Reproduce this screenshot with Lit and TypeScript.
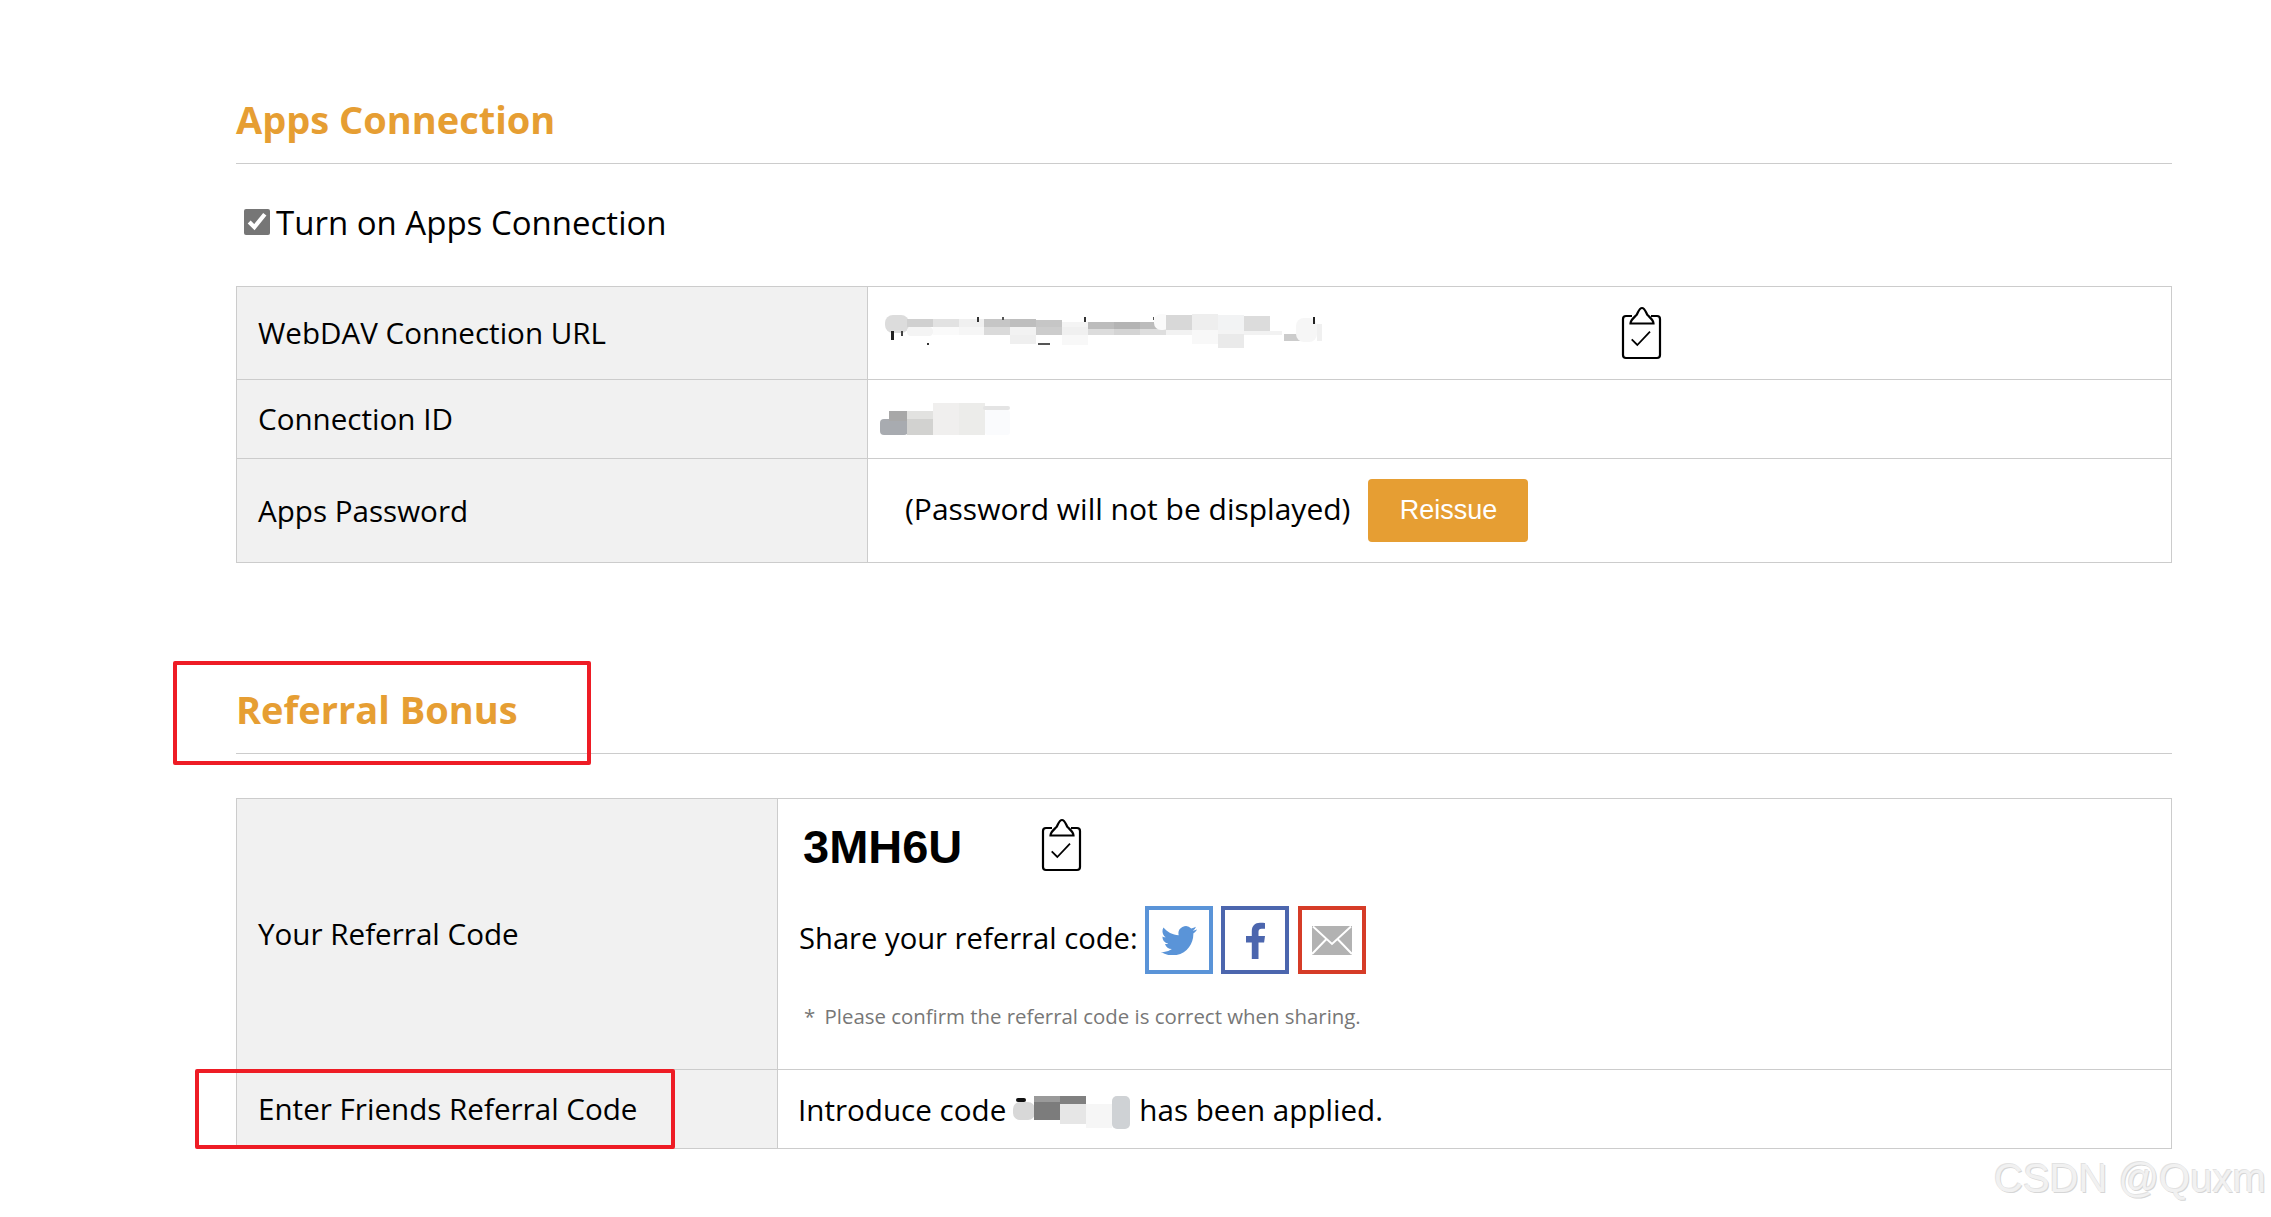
import { LitElement, html, css, svg } from "lit";
import { customElement } from "lit/decorators.js";

type R = [number, number, number, number, string, number?];

const urlBlob: R[] = [
  [15, 13, 24, 18, "#dcdcdc", 8],
  [37, 17, 26, 8, "#d0d0d0"], [63, 17, 26, 8, "#e2e2e2"], [89, 17, 25, 8, "#f0f0f0"], [114, 17, 26, 8, "#c6c6c6"],
  [140, 17, 26, 8, "#bebebe"], [166, 18, 26, 7, "#c6c6c6"], [192, 20, 26, 5, "#f4f4f4"], [218, 20, 26, 7, "#bcbcbc"],
  [244, 20, 26, 7, "#b4b4b4"], [270, 20, 26, 7, "#bcbcbc"],
  [37, 25, 26, 9, "#f4f4f4", 4], [63, 25, 26, 8, "#fafafa"], [89, 25, 25, 8, "#f6f6f6"], [114, 25, 26, 8, "#dadada"],
  [140, 25, 26, 8, "#f2f2f2"], [166, 25, 26, 8, "#cccccc"], [192, 25, 26, 8, "#f0f0f0"], [218, 27, 26, 6, "#dcdcdc"],
  [244, 27, 26, 6, "#d4d4d4"], [270, 27, 26, 6, "#dedede"], [296, 28, 26, 5, "#f2f2f2"],
  [140, 33, 26, 9, "#efefef"], [192, 33, 26, 10, "#f8f8f8"],
  [284, 12, 16, 16, "#fafafa", 7], [296, 13, 26, 15, "#d8d8d8"], [322, 12, 26, 16, "#eeeeee"], [348, 13, 26, 15, "#f2f3f4"],
  [374, 14, 26, 15, "#dcdcdc"],
  [322, 28, 26, 14, "#f8f8f8"], [348, 32, 26, 14, "#eaeaea"], [348, 28, 26, 4, "#f4f4f4"], [374, 29, 38, 4, "#f2f2f2"],
  [414, 32, 24, 7, "#cccccc"], [426, 16, 21, 24, "#f6f6f6", 8], [447, 22, 5, 17, "#f0f0f0"],
  [21, 29, 3, 9, "#222"], [31, 29, 2, 5, "#444"], [57, 41, 2, 2, "#333"], [168, 41, 12, 2, "#555"], [107, 15, 2, 5, "#333"],
  [132, 15, 2, 3, "#555"], [214, 15, 2, 5, "#333"], [283, 15, 1, 3, "#555"], [443, 15, 2, 7, "#222"],
];
const idBlob: R[] = [
  [10, 23, 28, 16, "#a8abb0", 4], [19, 15, 18, 10, "#a8a8a8"], [37, 15, 26, 8, "#e2e2e0"], [37, 23, 26, 16, "#d2d2d0"],
  [63, 7, 26, 32, "#f0efee"], [89, 7, 26, 32, "#ececea"], [115, 14, 25, 25, "#fafbfd", 3], [113, 10, 27, 4, "#e4e4e4", 2],
];
const codeBlob: R[] = [
  [5, 18, 22, 18, "#d8d8d8", 7], [8, 14, 10, 4, "#111", 2], [26, 18, 26, 18, "#7c7c7c"], [26, 12, 26, 6, "#9a9a9a"],
  [52, 12, 26, 8, "#808080"], [52, 20, 26, 20, "#e6e6e6"], [78, 20, 26, 24, "#f6f6f6"], [104, 12, 18, 33, "#cfd2d5", 5],
];

const blob = (w: number, h: number, rects: R[], cls: string) => html`<svg class=${cls} width=${w} height=${h} viewBox="0 0 ${w} ${h}">
  ${rects.map(([x, y, rw, rh, f, r]) => svg`<rect x=${x} y=${y} width=${rw} height=${rh} fill=${f} rx=${r ?? 0}></rect>`)}
</svg>`;

const clipboard = html`<svg class="clip" width="44" height="55" viewBox="0 0 44 55" fill="none" stroke="#000" stroke-width="2.2">
  <path d="M12 11H6a3 3 0 0 0-3 3v36a3 3 0 0 0 3 3h31a3 3 0 0 0 3-3V14a3 3 0 0 0-3-3h-6"></path>
  <path d="M10.500 18.500h23c0-3.500-3.500-6-6-8.500-1.500-2-2.500-7-5.500-7s-4 5-5.500 7c-2.500 2.500-6 5-6 8.500z"></path>
  <path d="M11.700 34.300L17.300 40L30 26.700" stroke-width="1.800"></path>
</svg>`;

@customElement("app-root")
export class AppRoot extends LitElement {
  static styles = css`
    :host {
      display: block;
      position: relative;
      height: 1217px;
      overflow: hidden;
      background: #fff;
      color: #000;
      font-family: "Open Sans", "Noto Sans", sans-serif;
      font-size: 30px;
    }
    .page { padding: 96px 99px 0 236px; }
    h2 {
      margin: 0;
      height: 48px;
      line-height: 46px;
      padding-bottom: 19px;
      border-bottom: 1px solid #ccc;
      color: #e69e33;
      font-size: 38px;
      font-weight: 700;
    }
    .section2 { margin-top: 123px; }
    .check {
      display: flex;
      align-items: center;
      height: 64px;
      margin: 26px 0 32px;
      padding-left: 8px;
      font-size: 33px;
      gap: 6px;
    }
    .check input {
      width: 26px;
      height: 26px;
      margin: 0;
      accent-color: #767676;
    }
    table {
      width: 100%;
      table-layout: fixed;
      border-collapse: collapse;
    }
    th, td {
      border: 1px solid #ccc;
      padding: 0;
      font-weight: 400;
      text-align: left;
    }
    th { background: #f1f1f1; padding: 0 0 1px 21px; font-size: 29.6px; }
    .t1 col.a { width: 631px; }
    .t2 col.a { width: 541px; }
    .t2 { margin-top: 44px; }
    .r93 { height: 93px; }
    .r79 { height: 79px; }
    .r104 { height: 104px; }
    .r271 { height: 271px; }
    .row { display: flex; align-items: center; }
    .url { padding: 0 0 2px 2px; }
    .url .clip { margin-left: 270px; }
    .id { padding: 3px 0 0 2px; }
    .pw { padding-left: 37px; gap: 18px; }
    .pw span { padding-bottom: 4px; }
    button {
      width: 160px;
      height: 63px;
      border: 0;
      border-radius: 4px;
      background: #e69e33;
      color: #fff;
      font: 27px "Liberation Sans", Arial, sans-serif;
      padding: 0;
    }
    td.ref { vertical-align: top; padding: 18px 0 0 21px; }
    .code { height: 55px; }
    .code b {
      font: 700 47px "Liberation Sans", Arial, sans-serif;
      width: 237px;
      padding-left: 4px;
      margin-top: 4px;
    }
    .share { margin-top: 34px; height: 68px; }
    .share .label { width: 346px; padding-bottom: 4px; font-size: 29.2px; white-space: nowrap; }
    .sbtn {
      box-sizing: border-box;
      width: 68px;
      height: 68px;
      border: 4px solid;
      display: flex;
      align-items: center;
      justify-content: center;
      margin-right: 8px;
      background: #fff;
    }
    .tw { border-color: #5a94d8; }
    .fb { border-color: #4c66ae; }
    .ml { border-color: #d63c27; margin-left: 1px; }
    .note {
      margin-top: 27px;
      padding-left: 5px;
      font-size: 20.4px;
      line-height: 30px;
      color: #777;
      white-space: nowrap;
    }
    .note span { margin-right: 4px; }
    .intro { padding-left: 20px; font-size: 29.6px; }
    .intro .b { margin: 0 6px 0 2px; }
    .mark {
      position: absolute;
      box-sizing: border-box;
      border: 4px solid #ee1c25;
      border-radius: 2px;
      pointer-events: none;
    }
    .m1 { left: 173px; top: 661px; width: 418px; height: 104px; }
    .m2 { left: 195px; top: 1069px; width: 480px; height: 80px; }
    .wm {
      position: absolute;
      left: 1994px;
      top: 1154px;
      font: 40px/48px "Liberation Sans", Arial, sans-serif;
      color: #f1f1f1;
      text-shadow: 1px 1px 0 #d6d6d6, -1px -1px 0 #e2e2e2;
      white-space: nowrap;
    }
  `;

  render() {
    return html`
      <div class="page">
        <h2>Apps Connection</h2>
        <label class="check"><input type="checkbox" checked /><span>Turn on Apps Connection</span></label>
        <table class="t1">
          <colgroup><col class="a" /><col /></colgroup>
          <tr class="r93">
            <th>WebDAV Connection URL</th>
            <td><div class="row url">${blob(480, 60, urlBlob, "b")}${clipboard}</div></td>
          </tr>
          <tr class="r79">
            <th>Connection ID</th>
            <td><div class="row id">${blob(160, 50, idBlob, "b")}</div></td>
          </tr>
          <tr class="r104">
            <th>Apps Password</th>
            <td><div class="row pw"><span>(Password will not be displayed)</span><button>Reissue</button></div></td>
          </tr>
        </table>
        <div class="section2">
          <h2>Referral Bonus</h2>
          <table class="t2">
            <colgroup><col class="a" /><col /></colgroup>
            <tr class="r271">
              <th>Your Referral Code</th>
              <td class="ref">
                <div class="row code"><b>3MH6U</b>${clipboard}</div>
                <div class="row share">
                  <span class="label">Share your referral code:</span>
                  <div class="sbtn tw">
                    <svg width="36" height="30" viewBox="0 1.500 24 20" fill="#5a94d8"><path d="M23.953 4.570a10 10 0 01-2.825.775 4.958 4.958 0 002.163-2.723c-.951.555-2.005.959-3.127 1.184a4.920 4.920 0 00-8.384 4.482C7.690 8.095 4.067 6.130 1.640 3.162a4.822 4.822 0 00-.666 2.475c0 1.710.870 3.213 2.188 4.096a4.904 4.904 0 01-2.228-.616v.060a4.923 4.923 0 003.946 4.827 4.996 4.996 0 01-2.212.085 4.936 4.936 0 004.604 3.417 9.867 9.867 0 01-6.102 2.105c-.390 0-.779-.023-1.170-.067a13.995 13.995 0 007.557 2.209c9.053 0 13.998-7.496 13.998-13.985 0-.210 0-.420-.015-.630A9.935 9.935 0 0024 4.590z"></path></svg>
                  </div>
                  <div class="sbtn fb">
                    <svg width="19" height="37" viewBox="0 0 19 37" fill="#4c66ae"><path d="M12.500 37V20.500h5.600l.9-6.500h-6.500V10c0-1.900.5-3.200 3.200-3.200H19V1c-.6-.1-2.600-.3-5-.3-5 0-8.200 3-8.200 8.500V14H0v6.500h5.800V37z"></path></svg>
                  </div>
                  <div class="sbtn ml">
                    <svg width="40" height="29" viewBox="0 0 40 29">
                      <rect width="40" height="29" fill="#b2b2b2"></rect>
                      <path d="M1 0.500L20 18L39 0.500M0 28L14 13.500M40 28L26 13.500" fill="none" stroke="#fff" stroke-width="2"></path>
                    </svg>
                  </div>
                </div>
                <div class="note"><span>*</span> Please confirm the referral code is correct when sharing.</div>
              </td>
            </tr>
            <tr class="r79">
              <th>Enter Friends Referral Code</th>
              <td><div class="row intro"><span>Introduce code</span>${blob(125, 50, codeBlob, "b")}<span>has been applied.</span></div></td>
            </tr>
          </table>
        </div>
      </div>
      <div class="mark m1"></div>
      <div class="mark m2"></div>
      <div class="wm">CSDN @Quxm</div>
    `;
  }
}
